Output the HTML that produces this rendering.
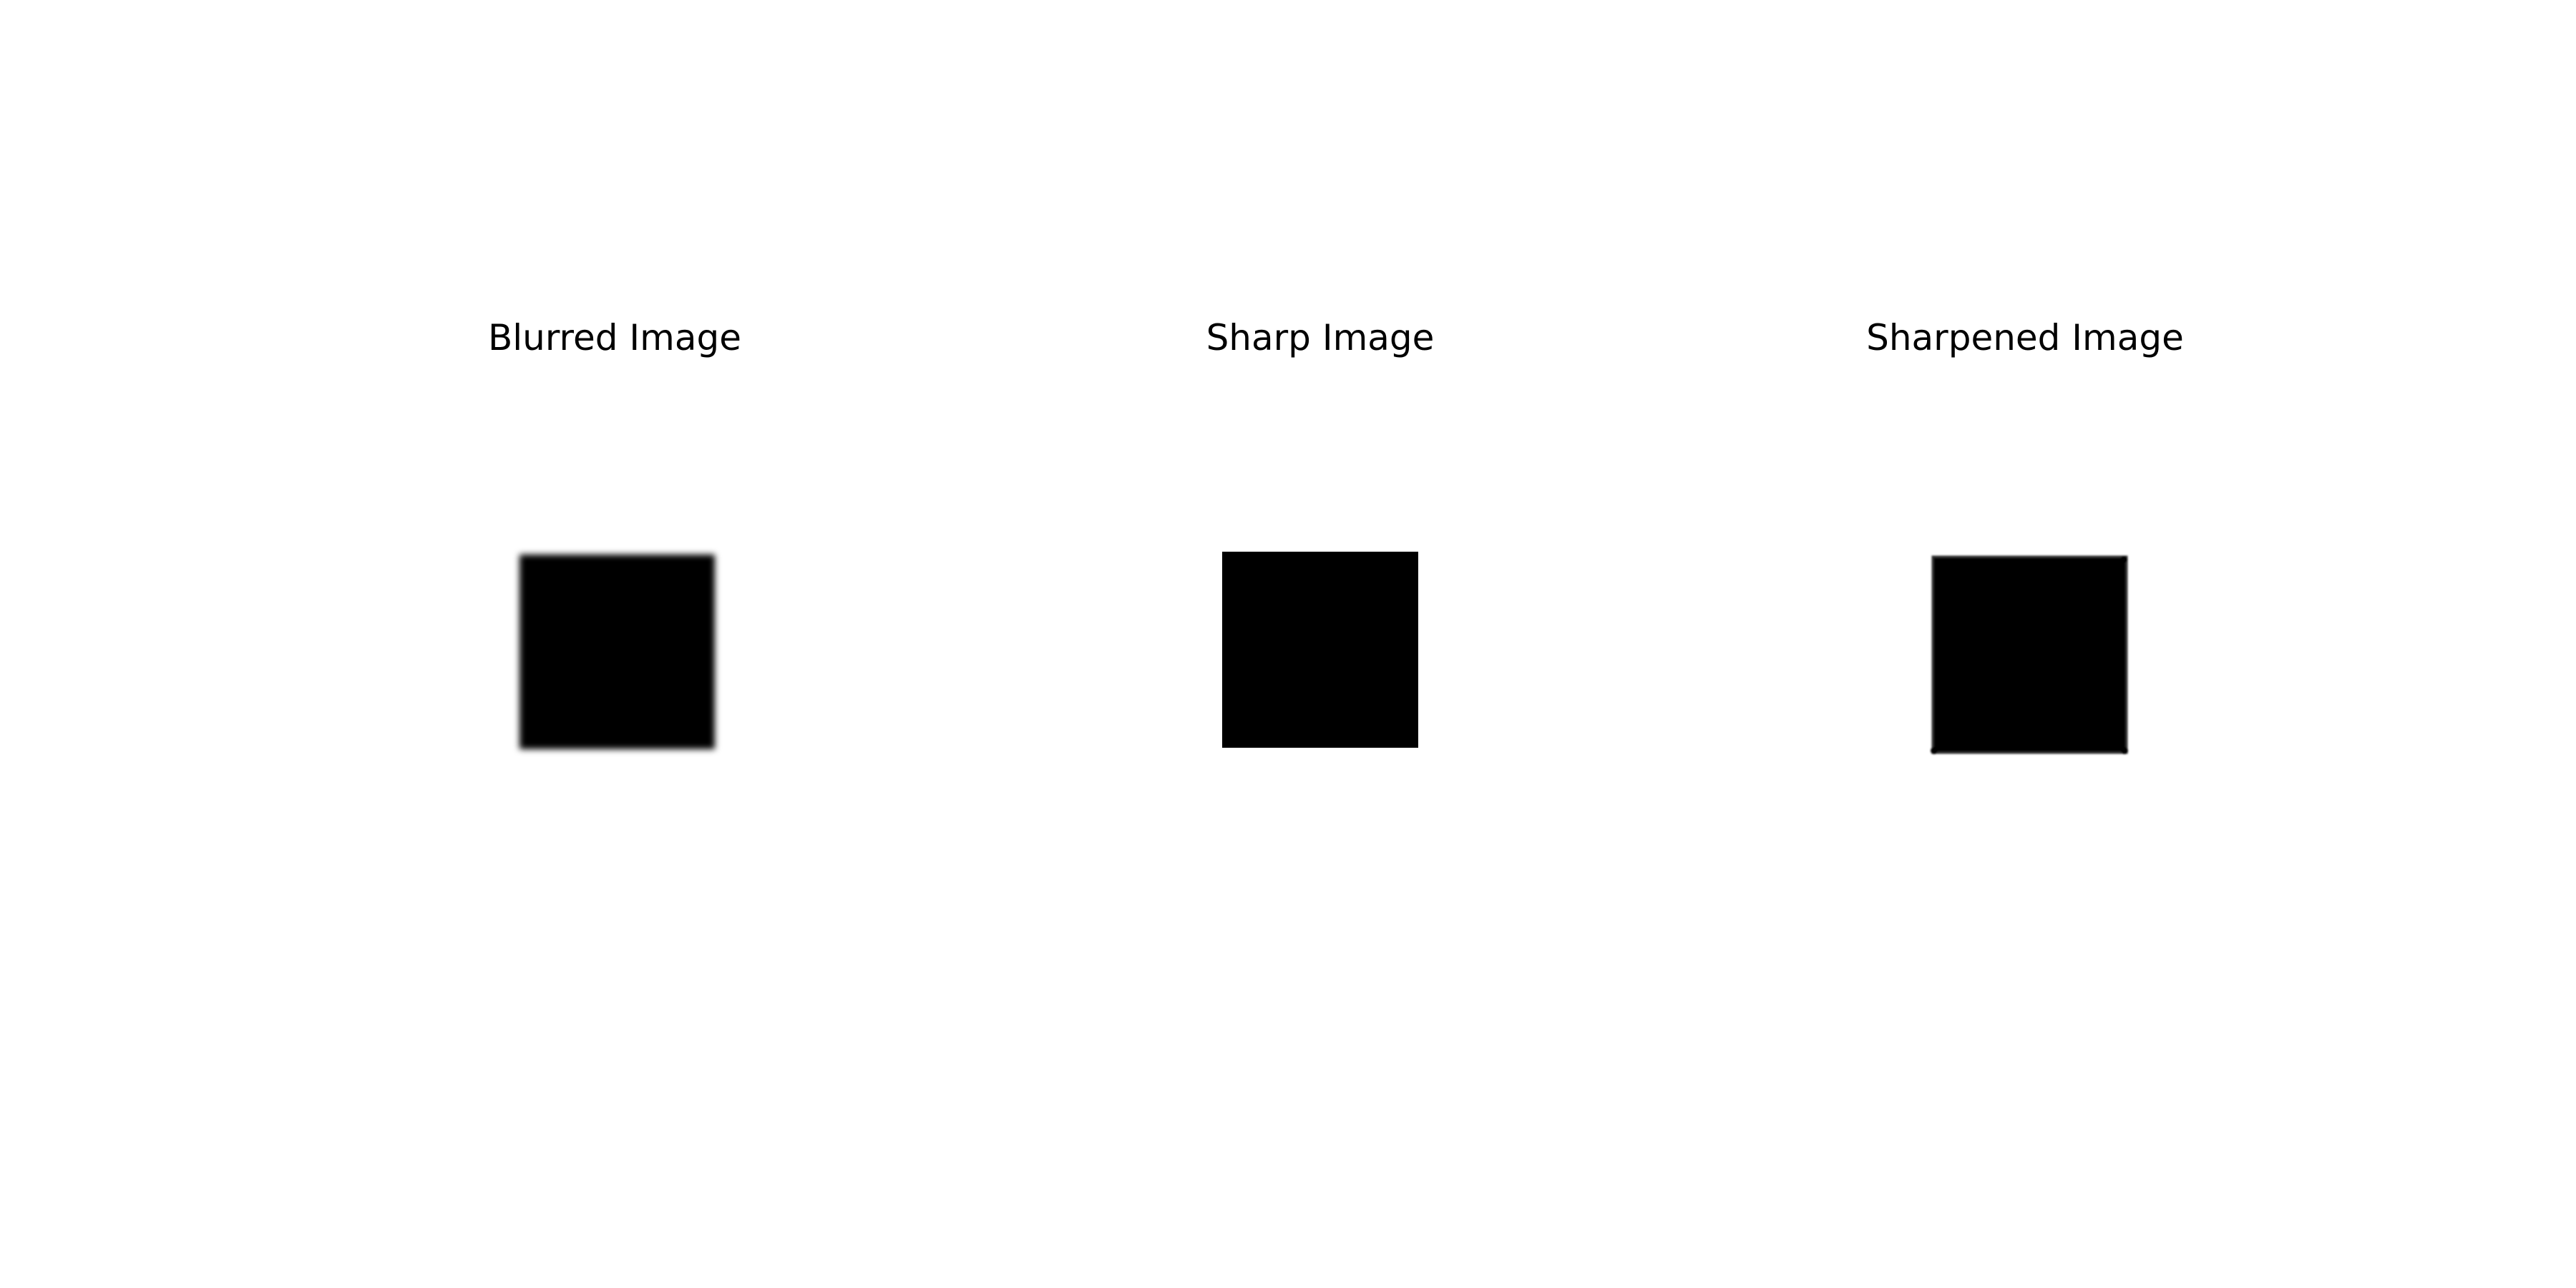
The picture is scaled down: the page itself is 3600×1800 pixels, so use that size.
<!DOCTYPE html>
<html><head><meta charset="utf-8"><style>
html,body{margin:0;padding:0;background:#fff;width:3600px;height:1800px;overflow:hidden}
svg{display:block}
text{font-family:"DejaVu Sans","Liberation Sans",sans-serif;font-size:50px;fill:#000}
</style></head><body>
<svg width="3600" height="1800" viewBox="0 0 3600 1800" xmlns="http://www.w3.org/2000/svg">
<defs>
<filter id="b" x="-20%" y="-20%" width="140%" height="140%"><feGaussianBlur stdDeviation="4.5"/></filter>
<filter id="s" x="-10%" y="-10%" width="120%" height="120%"><feGaussianBlur stdDeviation="1.2"/></filter>
</defs>
<rect width="3600" height="1800" fill="#fff"/>
<text x="859" y="489" text-anchor="middle">Blurred Image</text>
<text x="1845" y="489" text-anchor="middle">Sharp Image</text>
<text x="2830" y="489" text-anchor="middle">Sharpened Image</text>
<rect x="726" y="775" width="273" height="272" fill="#000" filter="url(#b)"/>
<rect x="1708" y="771" width="274" height="274" fill="#000"/>
<g filter="url(#s)">
<rect x="2701" y="778" width="271" height="274" fill="#000" stroke="#333" stroke-width="3"/>
<circle cx="2968" cy="782" r="5" fill="#000"/>
<circle cx="2703" cy="1049" r="5" fill="#000"/>
<circle cx="2969" cy="1049" r="5" fill="#000"/>
</g>
</svg>
</body></html>
